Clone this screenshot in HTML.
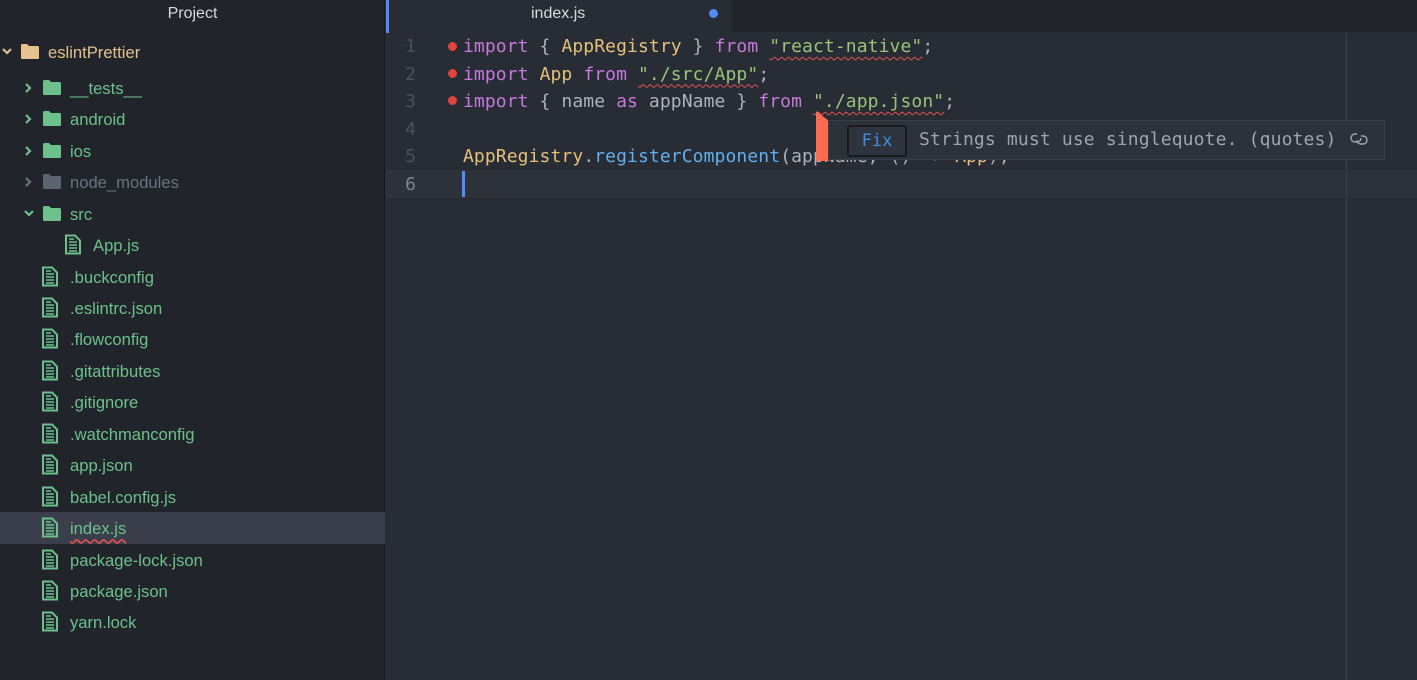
<!DOCTYPE html>
<html><head><meta charset="utf-8"><style>
*{margin:0;padding:0;box-sizing:border-box}
body{width:1417px;height:680px;overflow:hidden;background:#282c34;font-family:"Liberation Sans",sans-serif;position:relative}
#side{position:absolute;left:0;top:0;width:385px;height:680px;background:#21252b;border-right:1px solid #181a1f}
#side .hdr{position:absolute;top:0;left:0;width:385px;height:27px;text-align:center;color:#d7dae0;font-size:16px;line-height:27px}
.row{position:absolute;left:0;width:385px;height:31.4px;line-height:31.4px;color:#6cc08b;font-size:16.6px;white-space:nowrap}
.row.sel{background:#3a3f4b}
.row span.t{position:absolute}
.row svg{position:absolute}
#tabs{position:absolute;left:386px;top:0;width:1031px;height:32px;background:#21252b}
#tab{position:absolute;left:386px;top:0;width:346px;height:33px;background:#282c34;border-left:3px solid #568af2;color:#d7dae0;font-size:16px;line-height:27px}
#ed{position:absolute;left:386px;top:33px;width:1031px;height:647px;background:#282c34;font-family:"DejaVu Sans Mono","Liberation Mono",monospace;font-size:18px}
.ln{position:absolute;left:0;width:30px;text-align:right;color:#495162;line-height:27.5px}
.cl{position:absolute;left:77px;line-height:27.5px;color:#abb2bf;white-space:pre;letter-spacing:0.1px}
.k{color:#c678dd}.y{color:#e5c07b}.s{color:#98c379}.f{color:#61afef}
.sq{text-decoration:underline wavy #e05252;text-underline-offset:4px;text-decoration-thickness:1px}
.dot{position:absolute;left:62px;width:9px;height:9px;border-radius:50%;background:#e0443e}
</style></head><body>
<div id="side">
<div class="hdr">Project</div>
</div>
<div id="tabs"></div>
<div id="tab"><span style="position:absolute;left:142px;top:0">index.js</span><span style="position:absolute;left:320px;top:9px;width:9px;height:9px;border-radius:50%;background:#568af2"></span></div>
<div id="ed">
<div style="position:absolute;left:0;top:137px;width:1031px;height:27.5px;background:#2c313a"></div>
<div style="position:absolute;left:960px;top:0;width:1px;height:647px;background:#3a3f4a"></div>
<div class="ln" style="top:0">1</div><div class="ln" style="top:27.5px">2</div><div class="ln" style="top:55px">3</div><div class="ln" style="top:82.5px">4</div><div class="ln" style="top:110px">5</div><div class="ln" style="top:137.5px;color:#7f848e">6</div>
<div class="dot" style="top:9px"></div><div class="dot" style="top:36px"></div><div class="dot" style="top:63px"></div>
<div class="cl" style="top:0"><span class="k">import</span> { <span class="y">AppRegistry</span> } <span class="k">from</span> <span class="s sq">"react-native"</span>;</div>
<div class="cl" style="top:27.5px"><span class="k">import</span> <span class="y">App</span> <span class="k">from</span> <span class="s sq">"./src/App"</span>;</div>
<div class="cl" style="top:55px"><span class="k">import</span> { name <span class="k">as</span> appName } <span class="k">from</span> <span class="s sq">"./app.json"</span>;</div>
<div class="cl" style="top:110px"><span class="y">AppRegistry</span>.<span class="f">registerComponent</span>(appName, () =&gt; <span class="y">App</span>);</div>
<div style="position:absolute;left:76px;top:138px;width:3px;height:26px;background:#528bff"></div>
</div>
<!-- tooltip -->
<div style="position:absolute;left:816px;top:111px;width:13px;height:50px;background:#fe6a4f;clip-path:polygon(0 0,100% 20%,100% 100%,0 100%)"></div>
<div style="position:absolute;left:828px;top:120px;width:557px;height:40px;background:#2c313a;border:1px solid #3a3f4a;font-family:'DejaVu Sans Mono',monospace;font-size:18px;color:#9da5b4">
<div style="position:absolute;left:18px;top:4px;width:60px;height:32px;background:#2f343e;border:2px solid #181a1f;border-radius:3px;color:#3d8fe0;text-align:center;line-height:28px;font-size:17px">Fix</div>
<div style="position:absolute;left:90px;top:6px;line-height:26px;letter-spacing:0.15px">Strings must use singlequote. (quotes)</div>
<svg style="position:absolute;left:521px;top:10px" width="18" height="16" viewBox="0 0 18 16" fill="none" stroke="#9da5b4" stroke-width="1.4"><path d="M7 3H5a4 4 0 0 0 0 8h2a4 4 0 0 0 4-4"/><path d="M11 5h2a4 4 0 0 1 0 8h-2a4 4 0 0 1-4-4"/></svg>
</div>
<div id="rows"></div>
<script>
const fold=(c)=>`<svg width="20" height="17" viewBox="0 0 20 17"><path d="M1 2.5Q1 1 2.5 1H7l2 2h8.5Q19 3 19 4.5V15Q19 16 18 16H2Q1 16 1 15Z" fill="${c}"/></svg>`;
const file=`<svg width="18" height="21" viewBox="0 0 18 21"><path d="M2 1.5h9l5 5V19.5H2Z" fill="none" stroke="#6cc08b" stroke-width="2"/><path d="M5 8h8M5 11h8M5 14h8M5 17h8M5 5h5" stroke="#6cc08b" stroke-width="1.6"/></svg>`;
const chev=(d,c)=>d?`<svg width="12" height="10" viewBox="0 0 12 10"><path d="M2 2l4 4 4-4" fill="none" stroke="${c}" stroke-width="2.2"/></svg>`:`<svg width="10" height="12" viewBox="0 0 10 12"><path d="M2 2l4 4-4 4" fill="none" stroke="${c}" stroke-width="2.2"/></svg>`;
const items=[
[52,0,'eslintPrettier','root'],[88,1,'__tests__','f'],[119,1,'android','f'],[151,1,'ios','f'],[182,1,'node_modules','g'],[214,1,'src','fo'],
[245,2,'App.js','file'],[277,1,'.buckconfig','file'],[308,1,'.eslintrc.json','file'],[339,1,'.flowconfig','file'],[371,1,'.gitattributes','file'],
[402,1,'.gitignore','file'],[434,1,'.watchmanconfig','file'],[465,1,'app.json','file'],[497,1,'babel.config.js','file'],[528,1,'index.js','sel'],
[560,1,'package-lock.json','file'],[591,1,'package.json','file'],[622,1,'yarn.lock','file']];
let h='';
for(const [y,l,n,t] of items){
 const top=y-15.7;
 let cls='row'+(t=='sel'?' sel':'');
 let col=t=='root'?'#e1c08b':t=='g'?'#6b717d':'#6cc08b';
 let inner='';
 if(t=='root'){inner=chev(1,'#e1c08b').replace('<svg','<svg style="left:1px;top:11px"')+fold('#e8c28e').replace('<svg','<svg style="left:20px;top:7px"');}
 else if(t=='f'||t=='g'||t=='fo'){let c=t=='g'?'#6b717d':'#6cc08b';inner=(t=='fo'?chev(1,c).replace('<svg','<svg style="left:23px;top:11px"'):chev(0,c).replace('<svg','<svg style="left:24px;top:10px"'))+fold(t=='g'?'#5c6370':'#6cc08b').replace('<svg','<svg style="left:42px;top:7px"');}
 else {let x=l==2?64:41;inner=file.replace('<svg','<svg style="left:'+x+'px;top:5px"');}
 let tx=l==0?48:l==2?93:70;
 let txt=t=='sel'?`<span style="text-decoration:underline wavy #e05252;text-underline-offset:4px">${n}</span>`:n;
 h+=`<div class="${cls}" style="top:${top}px;color:${col}">${inner}<span class="t" style="left:${tx}px;top:1px">${txt}</span></div>`;
}
document.getElementById('side').insertAdjacentHTML('beforeend',h);
</script>
</body></html>
